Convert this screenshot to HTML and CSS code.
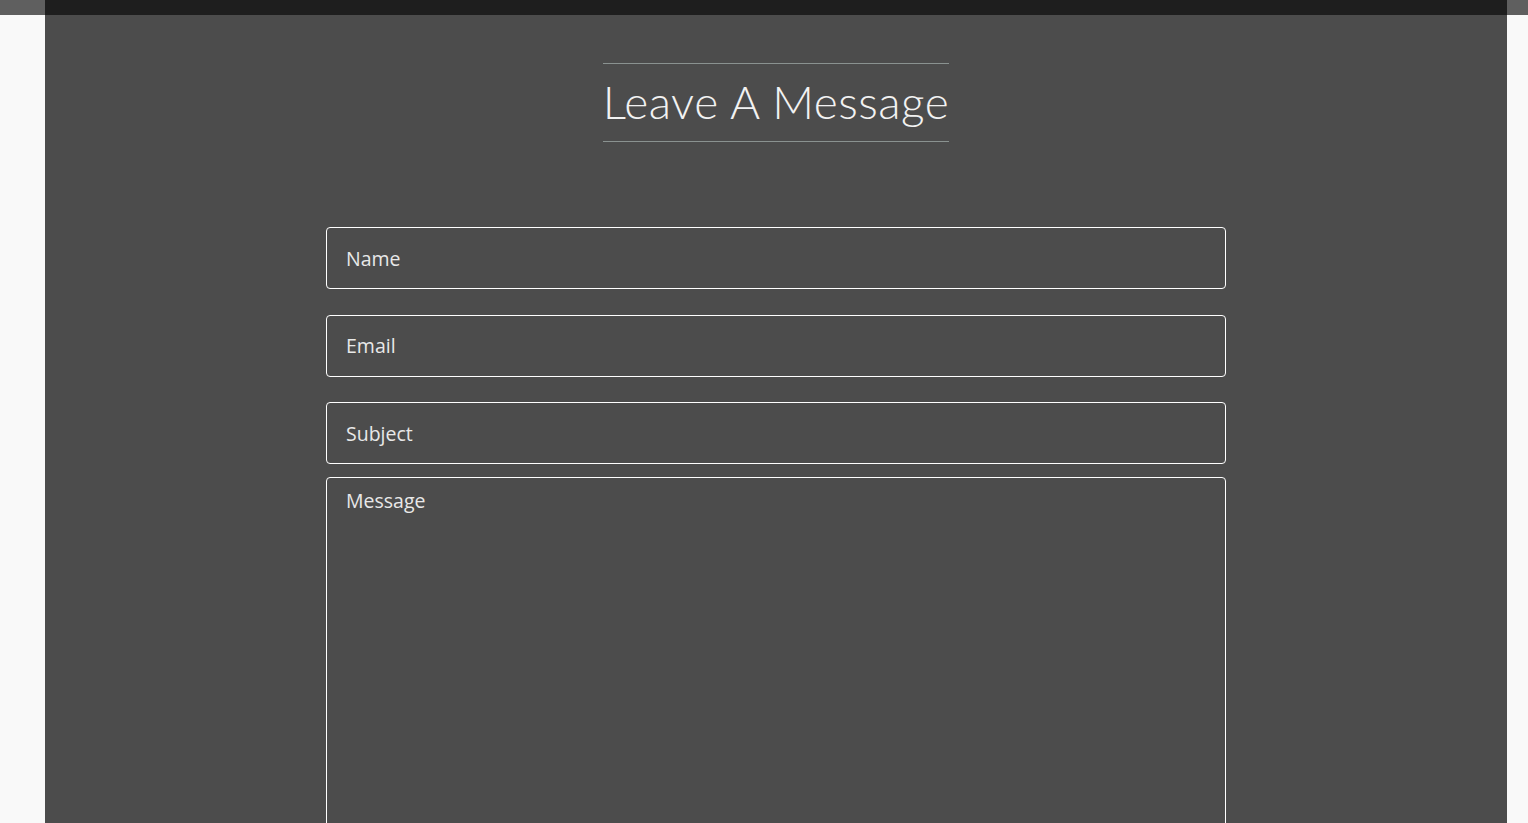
FILE: index.html
```html
<!DOCTYPE html>
<html lang="en">
<head>
<meta charset="utf-8">
<title>Leave A Message</title>
<link rel="stylesheet" href="styles.css">
</head>
<body>
<div class="topstrip"><div class="topbar"></div></div>
<main class="page">
  <div class="heading-wrap">
    <h1 class="heading">Leave A Message</h1>
  </div>
  <form class="form">
    <input class="field" type="text" placeholder="Name">
    <input class="field" type="email" placeholder="Email">
    <input class="field field-last" type="text" placeholder="Subject">
    <textarea class="field area" placeholder="Message"></textarea>
  </form>
</main>
</body>
</html>
```
FILE: styles.css
```css
html, body {
  margin: 0;
  padding: 0;
  background: #f9f9f9;
  height: 100%;
  overflow: hidden;
}
.topstrip {
  background: #5f5f5f;
  height: 15px;
  padding: 0 21px 0 45px;
}
.topbar {
  background: #1e1e1e;
  height: 15px;
}
.page {
  margin: 0 21px 0 45px;
  background: #4c4c4c;
  min-height: 808px;
  padding-top: 48px;
  box-sizing: border-box;
}
.heading-wrap {
  display: flex;
  justify-content: center;
}
.heading {
  margin: 0;
  font-family: "Lato", "Open Sans", sans-serif;
  font-weight: 300;
  font-size: 46px;
  line-height: 75px;
  padding: 0 0 2px;
  color: #f2f2f2;
  border-top: 1px solid #8a9290;
  border-bottom: 1px solid #8a9290;
  letter-spacing: 0.5px;
}
.form {
  width: 900px;
  margin: 85px auto 0;
  display: flex;
  flex-direction: column;
}
.field {
  box-sizing: border-box;
  width: 900px;
  height: 62px;
  margin: 0 0 25.5px;
  background: transparent;
  border: 1px solid #ffffff;
  border-radius: 4px;
  padding: 0 19px;
  font-family: "Open Sans", sans-serif;
  font-size: 19.5px;
  color: #eeeeee;
  outline: none;
}
.field-last { margin-bottom: 13px; }
.field::placeholder { color: #e8e8e8; opacity: 1; }
.area {
  height: 400px;
  resize: none;
  padding-top: 10px;
  line-height: 26px;
}
```
